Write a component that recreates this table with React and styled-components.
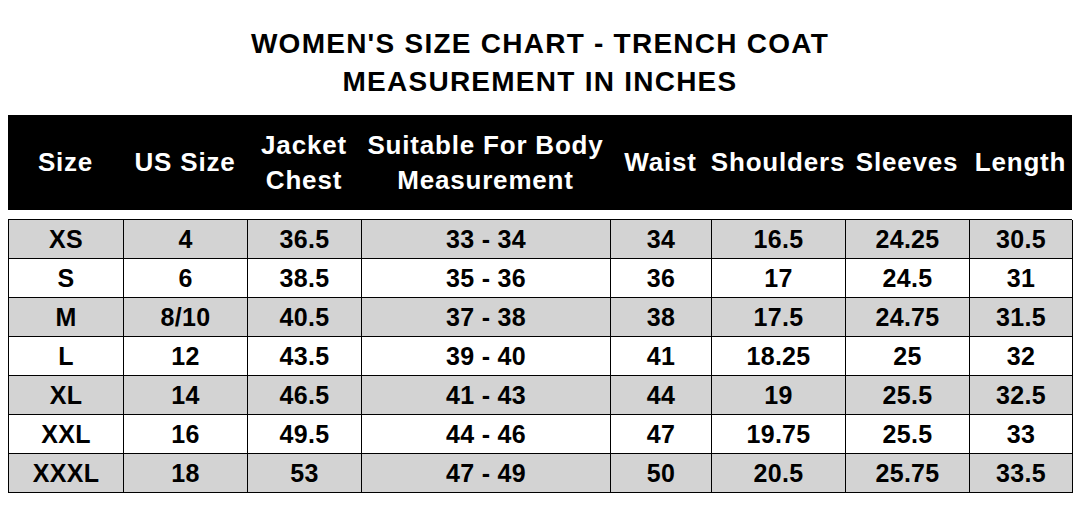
import React from 'react';
import styled, { createGlobalStyle } from 'styled-components';

const GlobalStyle = createGlobalStyle`
  html, body {
    margin: 0;
    padding: 0;
    background: #ffffff;
    font-family: "Liberation Sans", Arial, sans-serif;
  }
`;

const COLUMNS = '115px 124px 114px 249px 101px 134px 124px 103px';

const Page = styled.div`
  width: 1064px;
  margin-left: 8px;
  padding-top: 25px;
`;

const Title = styled.h1`
  margin: 0 0 14px;
  font-size: 28px;
  line-height: 38px;
  font-weight: 700;
  letter-spacing: 1.25px;
  text-align: center;
  color: #000;
`;

const HeaderRow = styled.div`
  display: grid;
  grid-template-columns: ${COLUMNS};
  height: 95px;
  background: #000;
  margin-bottom: 9px;
`;

const HeaderCell = styled.div`
  display: flex;
  align-items: center;
  justify-content: center;
  text-align: center;
  color: #fff;
  font-size: 26px;
  line-height: 35px;
  font-weight: 700;
  letter-spacing: 0.8px;
  white-space: nowrap;
`;

const Body = styled.div`
  border-top: 1px solid #000;
  border-left: 1px solid #000;
`;

const Row = styled.div`
  display: grid;
  grid-template-columns: ${COLUMNS};
  height: 39px;
  background: ${p => (p.$shaded ? '#d3d3d3' : '#ffffff')};
`;

const Cell = styled.div`
  display: flex;
  align-items: center;
  justify-content: center;
  border-right: 1px solid #000;
  border-bottom: 1px solid #000;
  font-size: 25px;
  font-weight: 700;
  letter-spacing: 0.3px;
  color: #000;
`;

const headers = [
  'Size',
  'US Size',
  ['Jacket', 'Chest'],
  ['Suitable For Body', 'Measurement'],
  'Waist',
  'Shoulders',
  'Sleeves',
  'Length',
];

const rows = [
  ['XS', '4', '36.5', '33 - 34', '34', '16.5', '24.25', '30.5'],
  ['S', '6', '38.5', '35 - 36', '36', '17', '24.5', '31'],
  ['M', '8/10', '40.5', '37 - 38', '38', '17.5', '24.75', '31.5'],
  ['L', '12', '43.5', '39 - 40', '41', '18.25', '25', '32'],
  ['XL', '14', '46.5', '41 - 43', '44', '19', '25.5', '32.5'],
  ['XXL', '16', '49.5', '44 - 46', '47', '19.75', '25.5', '33'],
  ['XXXL', '18', '53', '47 - 49', '50', '20.5', '25.75', '33.5'],
];

export default function App() {
  return (
    <>
      <GlobalStyle />
      <Page>
        <Title>
          WOMEN'S SIZE CHART - TRENCH COAT
          <br />
          MEASUREMENT IN INCHES
        </Title>
        <HeaderRow>
          {headers.map((h, i) => (
            <HeaderCell key={i}>
              {Array.isArray(h) ? (
                <span>
                  {h[0]}
                  <br />
                  {h[1]}
                </span>
              ) : (
                h
              )}
            </HeaderCell>
          ))}
        </HeaderRow>
        <Body>
          {rows.map((r, i) => (
            <Row key={r[0]} $shaded={i % 2 === 0}>
              {r.map((v, j) => (
                <Cell key={j}>{v}</Cell>
              ))}
            </Row>
          ))}
        </Body>
      </Page>
    </>
  );
}
